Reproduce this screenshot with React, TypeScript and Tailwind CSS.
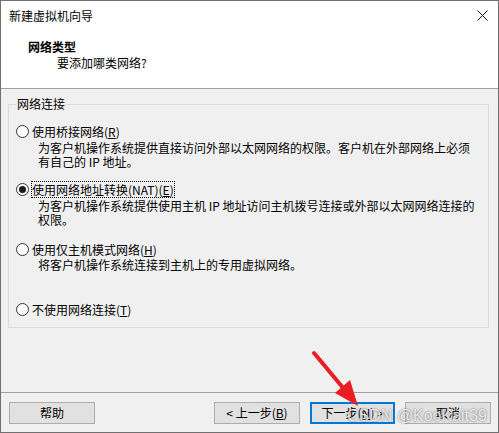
import React from "react";

const font = {
  fontFamily: '"Noto Sans CJK SC", "Microsoft YaHei UI", sans-serif',
};

type Option = {
  label: string;
  key: string;
  desc: string[];
  checked?: boolean;
  gap: string;
  descGap: string;
};

const options: Option[] = [
  {
    label: "使用桥接网络",
    key: "R",
    desc: [
      "为客户机操作系统提供直接访问外部以太网网络的权限。客户机在外部网络上必须",
      "有自己的 IP 地址。",
    ],
    gap: "mt-0",
    descGap: "mt-[2px]",
  },
  {
    label: "使用网络地址转换(NAT)",
    key: "E",
    desc: [
      "为客户机操作系统提供使用主机 IP 地址访问主机拨号连接或外部以太网网络连接的",
      "权限。",
    ],
    checked: true,
    gap: "mt-[13px]",
    descGap: "mt-[2px]",
  },
  {
    label: "使用仅主机模式网络",
    key: "H",
    desc: ["将客户机操作系统连接到主机上的专用虚拟网络。"],
    gap: "mt-[15px]",
    descGap: "mt-[1px]",
  },
  {
    label: "不使用网络连接",
    key: "T",
    desc: [],
    gap: "mt-[30px]",
    descGap: "mt-0",
  },
];

function Radio({ checked }: { checked?: boolean }) {
  return (
    <span className="w-[13px] h-[13px] rounded-full border border-[#333333] bg-white flex items-center justify-center shrink-0">
      {checked && <span className="w-[7px] h-[7px] rounded-full bg-[#1a1a1a]" />}
    </span>
  );
}

function Button({ children, primary }: { children: React.ReactNode; primary?: boolean }) {
  return (
    <button
      className={
        "h-[22px] bg-[#e1e1e1] text-[12px] text-black flex items-center justify-center " +
        (primary ? "w-[85px] border-2 border-[#0078d7]" : "w-[86px] border border-[#adadad]")
      }
    >
      {children}
    </button>
  );
}

export default function App() {
  return (
    <div
      className="relative w-[499px] h-[433px] border border-[#6f6f6f] bg-[#f0f0f0] flex flex-col overflow-hidden text-[12px] text-black"
      style={font}
    >
      {/* title bar + header */}
      <div className="bg-white h-[87px] flex flex-col">
        <div className="h-[29px] flex items-center justify-between pl-[8px] pr-[10px]">
          <span className="leading-[16px]">新建虚拟机向导</span>
          <svg width="11" height="11" viewBox="0 0 11 11">
            <path d="M0.5 0.5 L10.5 10.5 M10.5 0.5 L0.5 10.5" stroke="#111" strokeWidth="1" />
          </svg>
        </div>
        <div className="pl-[27px] pt-[9px] font-bold leading-[16px]">网络类型</div>
        <div className="pl-[56px] leading-[16px]">要添加哪类网络?</div>
      </div>
      <div className="h-px bg-[#a0a0a0]" />

      {/* network group */}
      <fieldset className="ml-[7px] mt-[7px] w-[481px] border border-[#dcdcdc] px-[7px] pb-[9px]">
        <legend className="px-[1px] leading-[16px]">网络连接</legend>
        <div className="pt-[11px]">
          {options.map((o) => (
            <div key={o.key} className={o.gap}>
              <div className="flex items-center h-[16px]">
                <Radio checked={o.checked} />
                <span
                  className={
                    "ml-[3px] leading-[15px] " +
                    (o.checked ? "outline-1 outline-dotted outline-black" : "")
                  }
                >
                  {o.label}(<span className="underline">{o.key}</span>)
                </span>
              </div>
              {o.desc.length > 0 && (
                <div className={"ml-[22px] leading-[13.5px] " + o.descGap}>
                  {o.desc.map((d) => (
                    <div key={d}>{d}</div>
                  ))}
                </div>
              )}
            </div>
          ))}
        </div>
      </fieldset>

      {/* footer buttons */}
      <div className="mt-auto h-px bg-[#a0a0a0]" />
      <div className="flex items-center pl-[8px] pr-[7px] pt-[9px] pb-[8px]">
        <Button>帮助</Button>
        <div className="flex-1" />
        <div className="flex gap-[10px]">
          <Button>&lt; 上一步(<span className="underline">B</span>)</Button>
          <Button primary>下一步(<span className="underline">N</span>) &gt;</Button>
          <Button>取消</Button>
        </div>
      </div>

      {/* red annotation arrow */}
      <svg
        className="absolute left-0 top-0 pointer-events-none"
        width="499"
        height="433"
        viewBox="0 0 499 433"
      >
        <line x1="313" y1="352" x2="343" y2="388" stroke="#ea1c24" strokeWidth="4" strokeLinecap="round" />
        <polygon points="357,405 334,392 349,379" fill="#ea1c24" />
      </svg>

      {/* watermark */}
      <span
        className="absolute left-[346px] top-[406px] text-[16px] leading-[18px] text-white/80 pointer-events-none [text-shadow:0_0_2px_rgba(0,0,0,0.6)]"
        style={{ fontFamily: '"Liberation Sans", Arial, sans-serif' }}
      >
        CSDN @KooKait39
      </span>
    </div>
  );
}
